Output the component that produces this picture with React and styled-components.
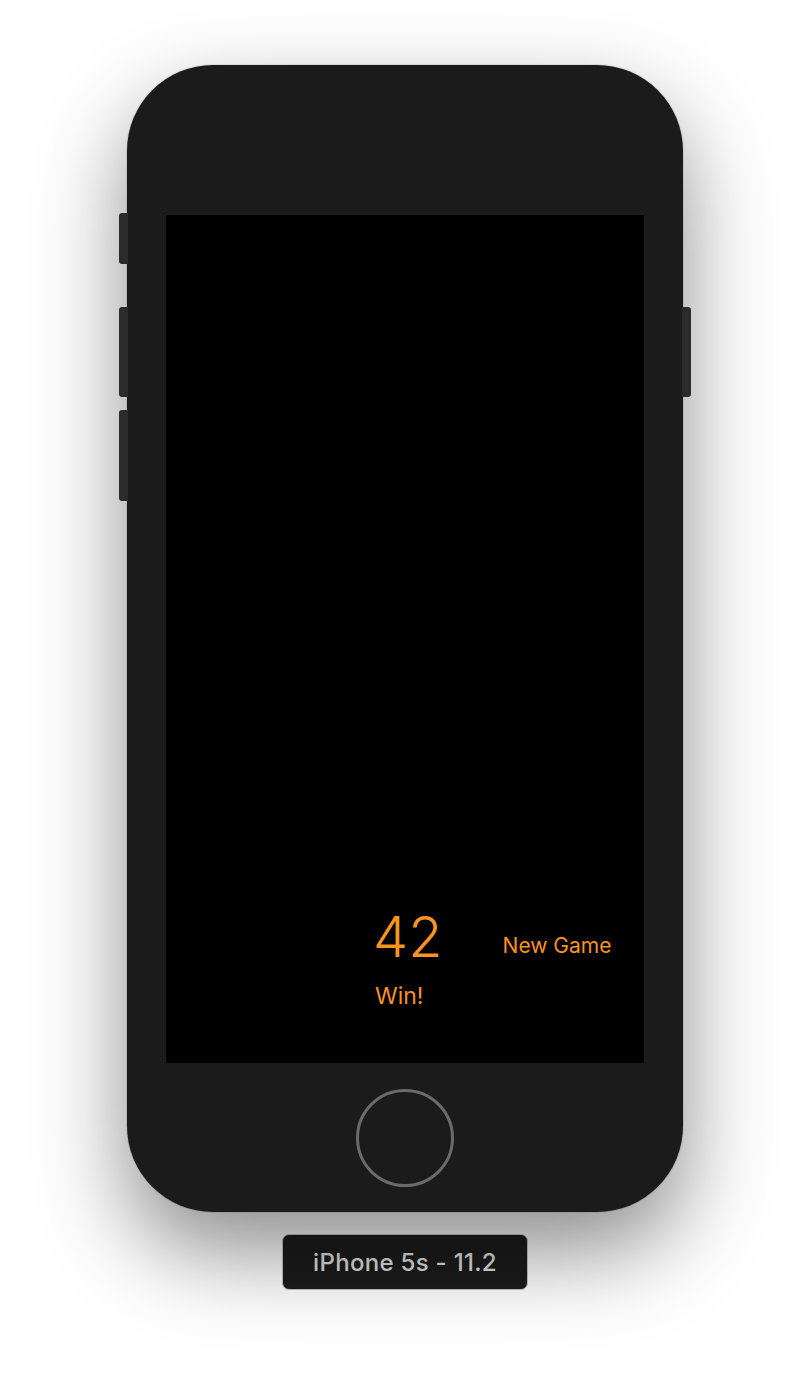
import React from 'react';
import styled, { createGlobalStyle } from 'styled-components';

const GlobalStyle = createGlobalStyle`
  html, body {
    margin: 0;
    padding: 0;
    background: #ffffff;
    font-family: "Inter", "Roboto", sans-serif;
  }
`;

const Page = styled.div`
  width: 810px;
  height: 1374px;
  display: flex;
  flex-direction: column;
  align-items: center;
  padding-top: 65px;
  box-sizing: border-box;
  overflow: hidden;
`;

const Phone = styled.div`
  position: relative;
  width: 556px;
  height: 1147px;
  background: #1b1b1b;
  border-radius: 86px;
  box-shadow: 0 40px 90px rgba(0, 0, 0, 0.45), 0 0 0 1px rgba(0, 0, 0, 0.08);
  display: grid;
  grid-template-rows: 150px 848px 1fr;
  justify-items: center;
`;

const SideButton = styled.div`
  position: absolute;
  top: ${p => p.top}px;
  height: ${p => p.h}px;
  width: 9px;
  background: #2b2b2b;
  ${p => (p.right ? 'right: -8px; border-radius: 0 3px 3px 0;' : 'left: -8px; border-radius: 3px 0 0 3px;')}
`;

const Screen = styled.div`
  grid-row: 2;
  width: 478px;
  height: 848px;
  background: #000;
  display: flex;
  flex-direction: column;
  justify-content: flex-end;
  padding: 0 0 52px 207px;
  box-sizing: border-box;
`;

const GameRow = styled.div`
  display: flex;
  align-items: center;
  gap: 60px;
`;

const Score = styled.span`
  font-size: 56px;
  font-weight: 300;
  color: #f7931e;
  line-height: 64px;
`;

const NewGame = styled.button`
  background: none;
  border: 0;
  padding: 0;
  margin-top: 16px;
  font-family: inherit;
  font-size: 21px;
  font-weight: 400;
  color: #f7931e;
`;

const Status = styled.span`
  margin-top: 12px;
  font-size: 23px;
  color: #f7931e;
  line-height: 30px;
  padding-left: 2px;
`;

const Bezel = styled.div`
  grid-row: 3;
  display: flex;
  align-items: center;
  justify-content: center;
`;

const HomeButton = styled.div`
  width: 92px;
  height: 92px;
  border-radius: 50%;
  border: 3px solid #6a6a6a;
`;

const DeviceLabel = styled.div`
  margin-top: 22px;
  width: 246px;
  height: 56px;
  box-sizing: border-box;
  background: #1c1c1c;
  border: 1px solid #c8c8c8;
  border-radius: 7px;
  display: flex;
  align-items: center;
  justify-content: center;
  font-size: 24px;
  font-weight: 500;
  letter-spacing: 0.3px;
  color: #e2e2e2;
`;

export default function App() {
  return (
    <>
      <GlobalStyle />
      <Page>
        <Phone>
          <SideButton top={148} h={51} />
          <SideButton top={242} h={90} />
          <SideButton top={345} h={91} />
          <SideButton right top={242} h={90} />
          <Screen>
            <GameRow>
              <Score>42</Score>
              <NewGame>New Game</NewGame>
            </GameRow>
            <Status>Win!</Status>
          </Screen>
          <Bezel>
            <HomeButton />
          </Bezel>
        </Phone>
        <DeviceLabel>iPhone 5s - 11.2</DeviceLabel>
      </Page>
    </>
  );
}
